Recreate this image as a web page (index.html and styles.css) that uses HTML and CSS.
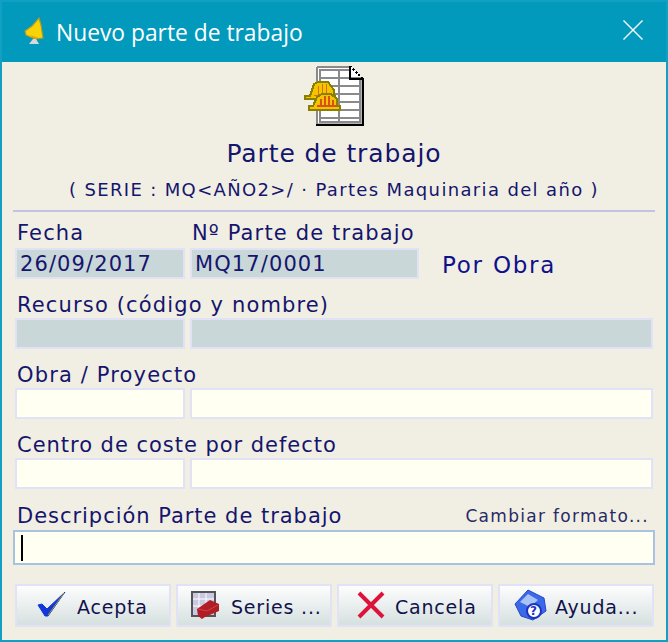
FILE: index.html
```html
<!DOCTYPE html>
<html lang="es">
<head>
    <meta charset="UTF-8">
    <meta name="viewport" content="width=device-width, initial-scale=1.0">
    <title>Nuevo parte de trabajo</title>
    <link rel="stylesheet" href="styles.css">
</head>
<body>
    <div class="window">
        <header class="titlebar">
            <svg class="app-icon" width="24" height="30" viewBox="0 0 24 30">
                <path d="M16 1 L18 8 L20 21 L12 22 L3 18 L2 14 L9 9 Z" fill="#f7d308" stroke="#a89a30" stroke-width="1.2"/>
                <path d="M7 18 L16 21 L12 22 Z" fill="#e0a800"/>
                <path d="M10 22 L13 22 L16 27 L6 27 Z" fill="#d5d9dc"/>
            </svg>
            <span class="title">Nuevo parte de trabajo</span>
            <svg class="close" width="20" height="20" viewBox="0 0 20 20">
                <path d="M0.5 0.5 L19.5 19.5 M19.5 0.5 L0.5 19.5" stroke="#fff" stroke-width="1.4" fill="none"/>
            </svg>
        </header>

        <div class="content">
            <div class="doc-head">
                <svg class="doc-icon" width="60" height="60" viewBox="0 0 60 60" shape-rendering="crispEdges">
                    <path d="M12 0 H46 L60 14 V60 H12 Z" fill="#fff"/>
                    <path d="M13 1 H46 M13 1 V58" fill="none" stroke="#8a8a8a" stroke-width="2"/>
                    <path d="M16 4 H46 V12 H56 V56 H16 Z" fill="none" stroke="#8a8a8a" stroke-width="2"/>
                    <path d="M16 12 H46 M16 20 H56 M16 28 H56 M16 36 H56 M16 44 H56 M16 52 H56 M35 4 V56" stroke="#8a8a8a" stroke-width="2" fill="none"/>
                    <path d="M58 14 V58 H14" fill="none" stroke="#b4b4b4" stroke-width="2"/>
                    <path d="M12 59 H59 V13 H46 V0" fill="none" stroke="#000" stroke-width="2"/>
                    <path d="M46 0 L60 14" stroke="#000" stroke-width="2" stroke-dasharray="2 2" fill="none"/>
                    <path d="M6 30 L10 18 L14 16 H24 L30 24 V30 H31 V33 H1 V30 Z" fill="#f4c400" stroke="#8b7f00" stroke-width="2"/>
                    <path d="M14 20 V29 M18 18 V29 M22 18 V29 M10 29 H26" stroke="#d8701a" stroke-width="1"/>
                    <path d="M9 40 L13 31 L18 28 H27 L33 33 V40 H36 V44 H5 V40 Z" fill="#f4c400" stroke="#8b7f00" stroke-width="2"/>
                    <path d="M17 33 V40 M21 30 V40 M25 30 V40 M29 34 V40 M13 40 H33" stroke="#d8501a" stroke-width="2"/>
                </svg>
                <h1 class="doc-title">Parte de trabajo</h1>
                <p class="doc-series">( SERIE : MQ&lt;AÑO2&gt;/ · Partes Maquinaria del año )</p>
            </div>

            <div class="form">
                <div class="row-labels first">
                    <label class="col-short">Fecha</label>
                    <label>Nº Parte de trabajo</label>
                </div>
                <div class="row-fields">
                    <div class="field locked col-short">26/09/2017</div>
                    <div class="field locked col-number">MQ17/0001</div>
                    <span class="por-obra">Por Obra</span>
                </div>

                <div class="row-labels"><label>Recurso (código y nombre)</label></div>
                <div class="row-fields">
                    <div class="field locked col-short"></div>
                    <div class="field locked col-long"></div>
                </div>

                <div class="row-labels"><label>Obra / Proyecto</label></div>
                <div class="row-fields">
                    <div class="field col-short"></div>
                    <div class="field col-long"></div>
                </div>

                <div class="row-labels"><label class="tight">Centro de coste por defecto</label></div>
                <div class="row-fields">
                    <div class="field col-short"></div>
                    <div class="field col-long"></div>
                </div>

                <div class="row-labels desc-labels">
                    <label class="tight">Descripción Parte de trabajo</label>
                    <a class="change-format">Cambiar formato...</a>
                </div>
                <div class="field focus"><span class="caret"></span></div>
            </div>

            <div class="buttons">
                <button class="btn btn-ok" type="button">
                    <svg width="36" height="28" viewBox="0 0 36 28">
                        <path d="M3 14 L7 13 L12 18 L30 1 L13 25 L10 25 Z" fill="#1237d8" stroke="#1237d8" stroke-width="1"/>
                        <path d="M13 24 L29 2" stroke="#a59a2c" stroke-width="1"/>
                    </svg>
                    Acepta
                </button>
                <button class="btn btn-series" type="button">
                    <svg width="30" height="30" viewBox="0 0 30 30">
                        <rect x="2" y="2" width="23" height="24" fill="#c9c9e2" stroke="#555" stroke-width="2"/>
                        <path d="M9 3 V25 M16 3 V25 M3 9 H24 M3 16 H24" stroke="#fff" stroke-width="1"/>
                        <path d="M7 19 L20 10 L29 14 V21 L15 27 L12 29 L8 26 Z" fill="#b01d24"/>
                        <path d="M8 19 L17 21 L28 15" stroke="#d64048" stroke-width="1" fill="none"/>
                    </svg>
                    Series ...
                </button>
                <button class="btn btn-cancel" type="button">
                    <svg width="28" height="28" viewBox="0 0 28 28">
                        <path d="M2 2 L26 26 M26 2 L2 26" stroke="#dc143c" stroke-width="4" fill="none"/>
                    </svg>
                    Cancela
                </button>
                <button class="btn btn-help" type="button">
                    <svg width="34" height="32" viewBox="0 0 34 32">
                        <path d="M2 15 L15 1 L31 9 L33 22 L20 31 L8 27 Z" fill="#3a6ae8" stroke="#2646c8" stroke-width="1"/>
                        <path d="M7 13 L15 5 L25 11 L17 18 Z" fill="#a9c3f5"/>
                        <circle cx="21" cy="22" r="7" fill="#fff" stroke="#1c34c0" stroke-width="2"/>
                        <text class="help-mark" x="21" y="26" text-anchor="middle">?</text>
                    </svg>
                    Ayuda...
                </button>
            </div>
        </div>
    </div>
</body>
</html>
```

FILE: styles.css
```css
html, body {
    margin: 0;
    padding: 0;
}
body {
    font-family: "DejaVu Sans", Verdana, sans-serif;
    background: #f1efe3;
}
.window {
    box-sizing: border-box;
    width: 668px;
    height: 642px;
    border: 2px solid #12a0c2;
    background: #f1efe3;
    display: flex;
    flex-direction: column;
}
.titlebar {
    height: 60px;
    flex-shrink: 0;
    background: #0199bc;
    color: #fff;
    display: flex;
    align-items: center;
    padding: 0 23px 0 21px;
}
.app-icon {
    margin-right: 9px;
}
.title {
    font-family: "Open Sans", sans-serif;
    font-size: 22.8px;
    flex: 1;
}
.close {
    margin-bottom: 4px;
}
.content {
    flex: 1;
    display: flex;
    flex-direction: column;
    min-height: 0;
}
.doc-head {
    margin: 4px 11px 0 11px;
    padding-bottom: 10px;
    border-bottom: 2px solid #c4c2e0;
    text-align: center;
    color: #15156e;
}
.doc-icon {
    display: block;
    margin: 0 auto;
}
.doc-title {
    margin: 13px 0 0;
    font-size: 25px;
    font-weight: normal;
    line-height: 30px;
    letter-spacing: 0.9px;
    color: #15156e;
}
.doc-series {
    margin: 11px 0 0;
    font-size: 18px;
    line-height: 20px;
    letter-spacing: 1.35px;
}
.form {
    padding: 0 11px 0 11px;
    color: #15156e;
}
.row-labels {
    display: flex;
    height: 24px;
    margin-top: 14px;
    margin-bottom: 1px;
    padding-left: 4px;
    font-size: 21px;
    line-height: 24px;
    letter-spacing: 1.15px;
    align-items: flex-end;
}
.row-labels.first {
    margin-top: 9px;
    margin-bottom: 3px;
}
.row-labels .col-short {
    width: 175px;
}
.row-labels .tight {
    letter-spacing: 0.97px;
}
.row-fields {
    display: flex;
    align-items: center;
    gap: 5px;
    padding-left: 2px;
}
.field {
    box-sizing: border-box;
    height: 31px;
    border: 2px solid #e2e2f6;
    background: #fffff2;
    font-size: 21px;
    line-height: 29px;
    letter-spacing: 1.1px;
    padding-left: 3px;
    color: #15156e;
    white-space: nowrap;
}
.field.locked {
    background: #c9d7d9;
}
.col-short {
    width: 170px;
}
.col-number {
    width: 229px;
}
.col-long {
    width: 463px;
}
.por-obra {
    margin-left: 18px;
    margin-top: 2px;
    font-size: 23px;
    letter-spacing: 1.75px;
    color: #10108c;
}
.desc-labels {
    justify-content: space-between;
    margin-top: 15px;
    margin-bottom: 2px;
}
.change-format {
    font-size: 17px;
    letter-spacing: 1.3px;
    padding-right: 6px;
    color: #2a2a66;
}
.field.focus {
    width: 642px;
    height: 35px;
    border: 2px solid #a9c2e0;
    padding-left: 6px;
    display: flex;
    align-items: center;
}
.caret {
    width: 2px;
    height: 26px;
    background: #000;
}
.buttons {
    display: flex;
    gap: 5px;
    padding: 0 12px 0 13px;
    margin-top: 19px;
}
.btn {
    flex: 0 0 156px;
    height: 43px;
    border: 2px solid #e2e2f6;
    background: linear-gradient(#fdfdfd, #d6e0e0);
    color: #12124a;
    font-family: inherit;
    font-size: 19px;
    letter-spacing: 0.8px;
    display: flex;
    align-items: center;
    padding: 3px 0 0;
}
.btn svg {
    margin-bottom: 4px;
}
.btn-ok {
    padding-left: 18px;
    gap: 6px;
}
.btn-series {
    padding-left: 12px;
    gap: 11px;
}
.btn-cancel {
    padding-left: 18px;
    gap: 10px;
}
.btn-help {
    padding-left: 13px;
    gap: 8px;
}
.help-mark {
    font-size: 12px;
    font-weight: bold;
    fill: #1c34c0;
}
```
